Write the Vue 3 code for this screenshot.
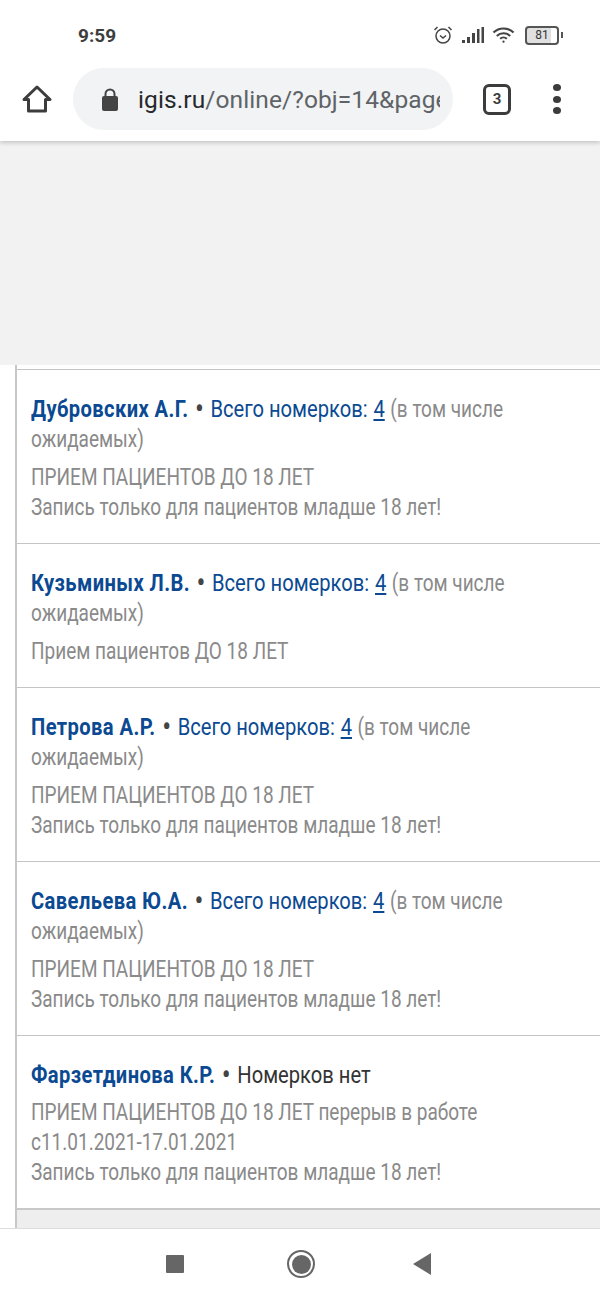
<script setup>
const rows = [
  { name: 'Дубровских А.Г.', count: 4, lines: [['ПРИЕМ ПАЦИЕНТОВ ДО 18 ЛЕТ', 'Запись только для пациентов младше 18 лет!']] },
  { name: 'Кузьминых Л.В.', count: 4, lines: [['Прием пациентов ДО 18 ЛЕТ']] },
  { name: 'Петрова А.Р.', count: 4, lines: [['ПРИЕМ ПАЦИЕНТОВ ДО 18 ЛЕТ', 'Запись только для пациентов младше 18 лет!']] },
  { name: 'Савельева Ю.А.', count: 4, lines: [['ПРИЕМ ПАЦИЕНТОВ ДО 18 ЛЕТ', 'Запись только для пациентов младше 18 лет!']] },
  { name: 'Фарзетдинова К.Р.', count: 0, lines: [['ПРИЕМ ПАЦИЕНТОВ ДО 18 ЛЕТ перерыв в работе с11.01.2021-17.01.2021', 'Запись только для пациентов младше 18 лет!']] }
]
</script>

<template>
  <div class="phone">
    <header class="chrome">
      <div class="status">
        <span class="time">9:59</span>
        <div class="status-icons">
          <svg width="20" height="20" viewBox="0 0 20 20" fill="none" stroke="#444" stroke-width="1.5"><circle cx="10" cy="11" r="7"/><path d="M7 10.5l3 2.5 3-2.5M1.5 5l3-3M18.5 5l-3-3"/></svg>
          <svg width="24" height="18" viewBox="0 0 24 18" fill="#444"><rect x="1" y="14" width="3" height="3"/><rect x="6" y="11" width="3" height="6"/><rect x="11" y="7" width="3" height="10"/><rect x="16" y="3" width="2.5" height="14"/><rect x="20.5" y="1" width="2.5" height="16"/></svg>
          <svg width="23" height="18" viewBox="0 0 24 18" fill="none" stroke="#444" stroke-width="2.2"><path d="M1.5 6.5a15 15 0 0 1 21 0M5 10a10 10 0 0 1 14 0M8.5 13a5 5 0 0 1 7 0"/><circle cx="12" cy="16" r="1.2" fill="#444" stroke="none"/></svg>
          <div class="battery"><span class="cell">81</span><i class="nub"></i></div>
        </div>
      </div>
      <div class="toolbar">
        <svg class="home" width="30" height="30" viewBox="0 0 30 30" fill="none" stroke="#3c3c3c" stroke-width="3" stroke-linejoin="round"><path d="M2 15.5L15 3l13 12.5h-4.500V27H6.500V15.500z"/></svg>
        <div class="omnibox">
          <svg width="18" height="24" viewBox="0 0 18 24" fill="#444"><path d="M4.500 10V7a4.500 4.500 0 0 1 9 0v3" fill="none" stroke="#444" stroke-width="2"/><rect x="1" y="9" width="16" height="15" rx="2"/></svg>
          <div class="url"><span class="host">igis.ru</span>/online/?obj=14&amp;page</div>
        </div>
        <div class="tabs">3</div>
        <div class="menu"><i></i><i></i><i></i></div>
      </div>
    </header>

    <div class="blank"></div>

    <main class="content">
      <div class="gutter"></div>
      <div class="list">
        <section v-for="row in rows" :key="row.name" class="row">
          <p class="title">
            <b class="name">{{ row.name }}</b>
            <span class="dot"> • </span>
            <template v-if="row.count">
              <span class="blue">Всего номерков: <u>{{ row.count }}</u></span>
              <span class="grey"> (в том числе ожидаемых)</span>
            </template>
            <span v-else class="dark">Номерков нет</span>
          </p>
          <p v-for="(group, i) in row.lines" :key="i" class="grey note">
            <span v-for="line in group" :key="line" class="line">{{ line }}</span>
          </p>
        </section>
        <div class="foot"></div>
      </div>
    </main>

    <nav class="navbar">
      <span class="square"></span>
      <span class="circle"><i></i></span>
      <span class="back"></span>
    </nav>
  </div>
</template>

<style scoped>
.phone { width: 600px; height: 1299px; display: flex; flex-direction: column; background: #fff; overflow: hidden; font-family: Roboto, "Liberation Sans", sans-serif; }
.chrome { height: 141px; flex: none; background: #fff; box-shadow: 0 2px 4px rgba(0,0,0,.18); position: relative; z-index: 1; }
.status { height: 68px; display: flex; align-items: center; justify-content: space-between; padding: 2px 37px 0 78px; box-sizing: border-box; }
.time { font: 700 19px Roboto, sans-serif; color: #3e3e3e; }
.status-icons { display: flex; align-items: center; gap: 7px; }
.status-icons svg:first-child { margin-right: 1px; }
.battery { display: flex; align-items: center; gap: 2px; margin-left: 3px; }
.cell { width: 30px; height: 15px; border: 2px solid #555; border-radius: 4px; font: 12px/15px Roboto, sans-serif; color: #333; text-align: center; background: linear-gradient(90deg, #e0e0e0 80%, #fff 80%); }
.nub { width: 2px; height: 6px; background: #555; }
.toolbar { height: 62px; display: flex; align-items: center; padding-left: 22px; }
.home { flex: none; }
.omnibox { width: 380px; height: 62px; margin-left: 21px; border-radius: 31px; background: #f1f3f4; box-sizing: border-box; padding-left: 28px; display: flex; align-items: center; gap: 19px; flex: none; }
.url { width: 302px; overflow: hidden; white-space: nowrap; font: 24.500px Roboto, sans-serif; letter-spacing: .1px; color: #5f6368; }
.host { color: #26282b; }
.tabs { width: 22px; height: 25px; margin-left: 30px; border: 3px solid #3c3c3c; border-radius: 6px; font: 700 15px/25px Roboto, sans-serif; text-align: center; color: #3c3c3c; flex: none; }
.menu { margin-left: 42px; display: flex; flex-direction: column; gap: 4.500px; }
.menu i { width: 8px; height: 7px; border-radius: 50%; background: #3c3c3c; }
.blank { height: 224px; flex: none; background: #f2f2f2; }
.content { height: 863px; flex: none; display: flex; }
.gutter { width: 15px; flex: none; }
.list { flex: 1; border-left: 2px solid #c8c8c8; padding-top: 4px; display: flex; flex-direction: column; }
.row { border-top: 1px solid #c4c4c4; padding: 25px 14px 20px; }
p { margin: 0; width: 670px; font-size: 23px; line-height: 30px; transform: scaleX(.826); transform-origin: left center; }
.note { margin-top: 8px; }
.row:nth-child(5) .note { margin-top: 7px; }
.line { display: block; }
.name, .blue, .dark { font-size: 24.400px; line-height: 1; }
.name { color: #0b4a92; letter-spacing: .5px; }
.dot { color: #444; font-size: 32px; line-height: 0; vertical-align: -2px; }
.blue { color: #0b4a92; }
.blue u { padding: 0 1px; }
.grey { color: #8a8a8a; }
.dark { color: #333; }
.foot { flex: 1; background: #eee; border-top: 2px solid #c8c8c8; }
.navbar { flex: 1; background: #fff; border-top: 1px solid #ddd; display: flex; align-items: center; }
.square { width: 18px; height: 18px; margin-left: 166px; background: #666; border-radius: 1px; }
.circle { width: 28px; height: 28px; box-sizing: border-box; margin-left: 103px; border: 2px solid #666; border-radius: 50%; display: flex; align-items: center; justify-content: center; }
.circle i { width: 19px; height: 19px; border-radius: 50%; background: #666; }
.back { margin-left: 98px; border-style: solid; border-width: 11px 18px 11px 0; border-color: transparent #666 transparent transparent; }
</style>
